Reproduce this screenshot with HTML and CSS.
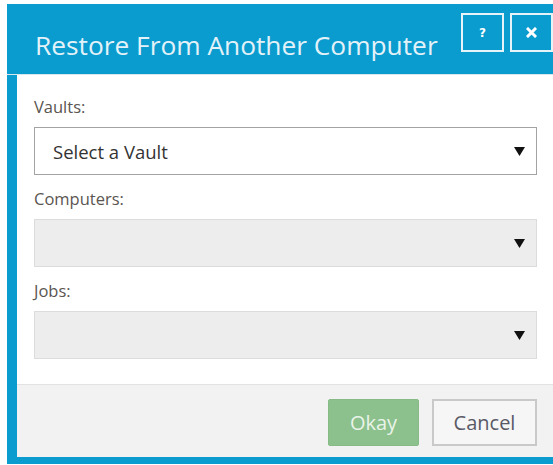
FILE: index.html
```html
<!DOCTYPE html>
<html lang="en">
<head>
<meta charset="utf-8">
<title>Restore From Another Computer</title>
<link rel="stylesheet" href="styles.css">
</head>
<body>
<div class="stage">
  <div class="dialog">
    <div class="dialog-header">
      <h1 class="dialog-title">Restore From Another Computer</h1>
      <div class="header-tools">
        <button class="tool-btn" type="button" aria-label="Help"><span class="tool-q">?</span></button>
        <button class="tool-btn" type="button" aria-label="Close">
          <svg width="11" height="11" viewBox="0 0 11 11"><path d="M2 2 L9 9 M9 2 L2 9" stroke="#fff" stroke-width="3" stroke-linecap="square"/></svg>
        </button>
      </div>
    </div>
    <div class="dialog-body">
      <div class="field">
        <div class="field-label">Vaults:</div>
        <div class="select">
          <span class="select-value">Select a Vault</span>
          <svg class="caret" width="11" height="9" viewBox="0 0 11 9"><path d="M0 0 H11 L5.5 9 Z" fill="#111"/></svg>
        </div>
      </div>
      <div class="field">
        <div class="field-label">Computers:</div>
        <div class="select is-disabled">
          <span class="select-value"></span>
          <svg class="caret" width="11" height="9" viewBox="0 0 11 9"><path d="M0 0 H11 L5.5 9 Z" fill="#111"/></svg>
        </div>
      </div>
      <div class="field">
        <div class="field-label">Jobs:</div>
        <div class="select is-disabled">
          <span class="select-value"></span>
          <svg class="caret" width="11" height="9" viewBox="0 0 11 9"><path d="M0 0 H11 L5.5 9 Z" fill="#111"/></svg>
        </div>
      </div>
    </div>
    <div class="dialog-footer">
      <button class="btn btn-okay" type="button">Okay</button>
      <button class="btn btn-cancel" type="button">Cancel</button>
    </div>
  </div>
</div>
</body>
</html>
```

FILE: styles.css
```css
html, body {
  margin: 0;
  padding: 0;
  background: #ffffff;
  overflow: hidden;
  width: 553px;
  height: 465px;
}

.stage {
  margin: 4px 0 0 7px;
  width: 546px;
  overflow: hidden;
}

.dialog {
  width: 546px;
  box-sizing: border-box;
  background: #ffffff;
  border-left: 10px solid #0a9ccf;
  border-bottom: 7px solid #0a9ccf;
  font-family: "Open Sans", "DejaVu Sans", sans-serif;
}

.dialog-header {
  background: #0a9ccf;
  height: 70px;
  margin-left: -10px;
  padding: 0 0 0 28px;
  display: flex;
  align-items: flex-start;
  border-bottom: 1px solid #d9e6ec;
}

.dialog-title {
  margin: 0;
  padding-top: 23px;
  font-size: 26.3px;
  line-height: 36px;
  font-weight: 400;
  color: #e3f2f9;
  white-space: nowrap;
  width: 427px;
}

.header-tools {
  display: flex;
  gap: 6px;
  padding-top: 9px;
}

.tool-btn {
  width: 43px;
  height: 39px;
  padding: 0;
  margin: 0;
  background: transparent;
  border: 2px solid #e6f4fa;
  display: flex;
  align-items: center;
  justify-content: center;
}

.tool-q {
  color: #ffffff;
  font-family: "DejaVu Sans", sans-serif;
  font-weight: 700;
  font-size: 12px;
  line-height: 12px;
}

.dialog-body {
  padding: 21px 0 25px 17px;
  width: 503px;
  display: flex;
  flex-direction: column;
  gap: 13px;
}

.field-label {
  font-size: 16.5px;
  line-height: 22px;
  color: #5a5550;
  margin-bottom: 9px;
}

.select {
  height: 46px;
  border: 1px solid #a3a3a3;
  background: #ffffff;
  display: flex;
  align-items: center;
  justify-content: space-between;
  padding: 0 11px 0 18px;
}

.select.is-disabled {
  background: #ededed;
  border-color: #dcdcdc;
}

.select-value {
  font-size: 18.5px;
  color: #333333;
}

.caret {
  display: block;
}

.dialog-footer {
  background: #f2f2f2;
  border-top: 1px solid #e2e2e2;
  height: 73px;
  display: flex;
  justify-content: flex-end;
  align-items: flex-start;
  gap: 13px;
  padding: 14px 16px 0 0;
  box-sizing: border-box;
}

.btn {
  height: 47px;
  font-family: "Open Sans", "DejaVu Sans", sans-serif;
  font-size: 20px;
  padding: 0;
  margin: 0;
  cursor: default;
}

.btn-okay {
  width: 91px;
  background: #8cc08c;
  border: 1px solid #86bb86;
  border-radius: 2px;
  color: #e9f4e9;
}

.btn-cancel {
  width: 105px;
  background: #f6f6f6;
  border: 2px solid #c9c9c9;
  color: #5a5a66;
}
```
